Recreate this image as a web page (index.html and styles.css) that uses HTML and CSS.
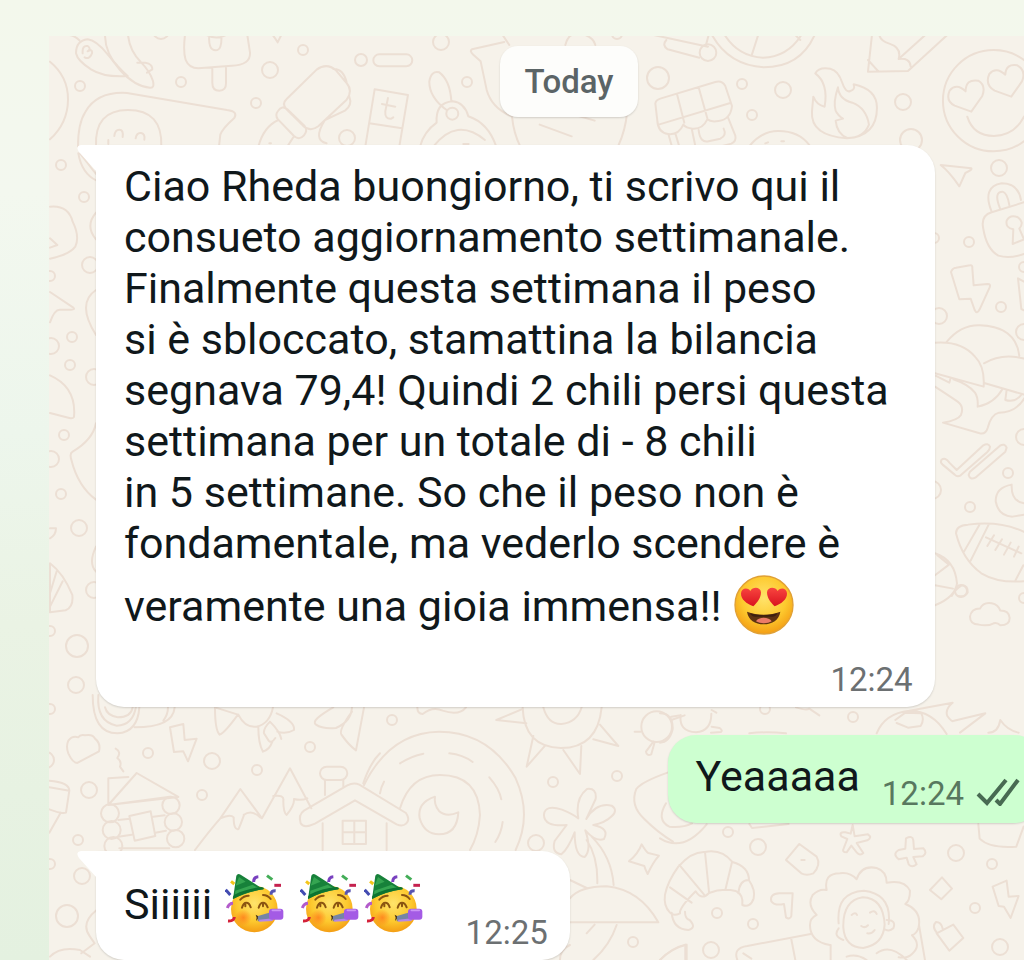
FILE: index.html
```html
<!DOCTYPE html>
<html lang="it">
<head>
  <meta charset="UTF-8">
  <meta name="viewport" content="width=device-width, initial-scale=1.0">
  <title>Chat</title>
  <link rel="stylesheet" href="styles.css">
</head>
<body>

<!-- Shared emoji and bubble tail -->
<svg class="sprite" aria-hidden="true">
  <defs>
    <radialGradient id="face" cx="50%" cy="38%" r="64%">
      <stop offset="0" stop-color="#ffe36b"/>
      <stop offset="0.6" stop-color="#fdc92e"/>
      <stop offset="1" stop-color="#f39a12"/>
    </radialGradient>
    <radialGradient id="blush">
      <stop offset="0" stop-color="#ff7a1c" stop-opacity="0.8"/>
      <stop offset="1" stop-color="#ff7a1c" stop-opacity="0"/>
    </radialGradient>
    <linearGradient id="heart" x1="0" y1="0" x2="0" y2="1">
      <stop offset="0" stop-color="#f8453f"/>
      <stop offset="1" stop-color="#d9121f"/>
    </linearGradient>
  </defs>
  <symbol id="love" viewBox="0 0 180 180">
    <circle cx="90" cy="90" r="87" fill="url(#face)" stroke="#e0a035" stroke-width="4"/>
    <path d="M58 94C38 86 20 74 21 55c1-14 18-20 28-7 7-14 31-13 32 4 0 16-10 30-23 42z" fill="url(#heart)"/>
    <path d="M122 94c-13-12-23-26-23-42 1-17 25-18 32-4 10-13 27-7 28 7 1 19-17 31-37 39z" fill="url(#heart)"/>
    <path d="M39 110c30 12 70 12 100 0-4 25-24 38-50 38s-46-13-50-38z" fill="#5d3312"/>
    <path d="M48 115c25 8 56 8 82 0-2 7-8 10-15 10H64c-8 0-13-3-16-10z" fill="#3d2010"/>
    <path d="M66 139c6-14 40-14 47 0-12 8-34 8-47 0z" fill="#ec7c68"/>
  </symbol>
  <symbol id="party" viewBox="0 0 180 180">
    <circle cx="88" cy="108" r="70" fill="url(#face)"/>
    <circle cx="55" cy="134" r="25" fill="url(#blush)"/>
    <path d="M24 78L34 8q4-8 13-3l68 44C82 54 52 63 24 78z" fill="#17813a"/>
    <path d="M42 12l20 14-30 12zM31 53l52-18 20 12-73 23z" fill="#35a551"/>
    <path d="M24 78q-2-8 4-13 38-19 81-23 10 1 7 7-49 6-92 29z" fill="#0d7331"/>
    <g fill="none" stroke="#8a5411" stroke-width="6" stroke-linecap="round">
      <path d="M46 80q10-12 25-12M114 66q14 0 23 12"/>
      <path d="M51 104q4-15 13-15t13 14M61 91v9M101 104q4-15 13-15t14 14M114 91v9"/>
    </g>
    <path d="M92 125l12 7-11 12 2-10z" fill="#473215"/>
    <path d="M99 129l48-14-5 27-44 3z" fill="#7685a5"/>
    <path d="M103 140l40-4v8l-41 2z" fill="#b587e8"/>
    <rect x="132" y="107" width="43" height="33" rx="9" fill="#a45be5"/>
    <path d="M142 112h24" stroke="#cc94f5" stroke-width="5" stroke-linecap="round"/>
    <g fill="none" stroke-width="9">
      <path d="M2 50l14 16" stroke="#424bb1"/>
      <path d="M7 105q5-14 17-14" stroke="#b35ccb"/>
      <path d="M9 144q18 1 19-12" stroke="#d42139"/>
      <path d="M86 27q0-15 14-16" stroke="#7840bf"/>
      <path d="M126 8l16 12" stroke="#43ad57"/>
      <path d="M148 37h20" stroke="#c5224f"/>
      <path d="M138 65q0-13 14-12" stroke="#5754b1"/>
      <path d="M18 25l10 8" stroke="#f4c61b"/>
    </g>
  </symbol>
  <symbol id="tail" viewBox="0 0 20 28">
    <path d="M20 0H4Q-2 1 2 7l18 20z" fill="#fff"/>
  </symbol>
</svg>

<main class="chat">

  <!-- Wallpaper -->
  <svg class="doodles" viewBox="49 36 975 924" preserveAspectRatio="xMinYMin slice" aria-hidden="true">
    <g class="dots">
      <circle cx="80" cy="86" r="5"/><circle cx="181" cy="82" r="5"/><circle cx="303" cy="50" r="5"/>
      <circle cx="270" cy="70" r="8"/><circle cx="256" cy="103" r="5"/><circle cx="361" cy="60" r="6"/>
      <circle cx="441" cy="42" r="8"/><circle cx="467" cy="82" r="5"/><circle cx="347" cy="138" r="8"/>
      <circle cx="161" cy="31" r="8"/><circle cx="617" cy="34" r="5"/>
      <circle cx="658" cy="78" r="11"/><circle cx="742" cy="84" r="5"/><circle cx="783" cy="90" r="8"/>
      <circle cx="752" cy="115" r="5"/><circle cx="903" cy="102" r="8"/><circle cx="911" cy="140" r="11"/>
      <circle cx="61" cy="165" r="5"/><circle cx="84" cy="197" r="5"/><circle cx="90" cy="265" r="8"/>
      <circle cx="50" cy="276" r="5"/><circle cx="72" cy="337" r="5"/><circle cx="51" cy="346" r="8"/>
      <circle cx="70" cy="365" r="5"/><circle cx="94" cy="377" r="8"/><circle cx="64" cy="435" r="5"/>
      <circle cx="51" cy="459" r="8"/><circle cx="61" cy="494" r="5"/><circle cx="79" cy="528" r="8"/>
      <circle cx="94" cy="590" r="8"/><circle cx="50" cy="631" r="5"/><circle cx="77" cy="646" r="11"/>
      <circle cx="999" cy="168" r="8"/><circle cx="969" cy="242" r="5"/><circle cx="934" cy="238" r="5"/>
      <circle cx="1024" cy="267" r="5"/><circle cx="1001" cy="307" r="5"/><circle cx="939" cy="316" r="8"/>
      <circle cx="1024" cy="332" r="8"/><circle cx="1024" cy="437" r="8"/><circle cx="1008" cy="473" r="5"/>
      <circle cx="970" cy="507" r="5"/><circle cx="932" cy="490" r="9"/><circle cx="961" cy="591" r="6"/>
      <circle cx="1024" cy="598" r="5"/><circle cx="76" cy="685" r="8"/><circle cx="50" cy="709" r="5"/>
      <circle cx="46" cy="760" r="8"/><circle cx="148" cy="753" r="5"/><circle cx="212" cy="761" r="8"/>
      <circle cx="257" cy="770" r="5"/><circle cx="310" cy="747" r="5"/><circle cx="202" cy="795" r="5"/>
      <circle cx="89" cy="790" r="8"/><circle cx="78" cy="840" r="5"/><circle cx="50" cy="864" r="5"/>
      <circle cx="82" cy="876" r="8"/><circle cx="67" cy="916" r="11"/><circle cx="392" cy="720" r="5"/>
      <circle cx="553" cy="782" r="5"/><circle cx="617" cy="776" r="5"/><circle cx="536" cy="843" r="8"/>
      <circle cx="633" cy="942" r="5"/><circle cx="853" cy="717" r="5"/><circle cx="765" cy="709" r="5"/>
      <circle cx="728" cy="832" r="5"/><circle cx="758" cy="847" r="8"/><circle cx="956" cy="853" r="8"/>
      <circle cx="992" cy="864" r="5"/><circle cx="717" cy="913" r="5"/><circle cx="753" cy="924" r="5"/>
      <circle cx="975" cy="908" r="5"/><circle cx="1000" cy="947" r="8"/><circle cx="711" cy="950" r="8"/>
    </g>

    <!-- top left: carrot, ice lolly, bubble, mitten, ticket, rabbit -->
    <g transform="scale(0.3333)">
      <path d="M150 185Q205 230 204 300T150 418"/>
      <path d="M200 105q20-2 38 16M228 160q0-38 35-42 25 2 60 45t60 65q-70 5-110-20t-45-48zM248 160q-2-25 15-22 12 8 0 16 15-8 13 6-8 20-22 12"/>
      <path d="M315 105q0 55 45 105t90 53q14 2 9-20-10-30-35-55-35-35-40-83M412 188q45-4 45 20l-16 10"/>
      <path d="M555 105q-6 50 2 75 10 25 38 25l100-8q58-2 55-40l-8-52M628 105q-4 45 19 46 20 0 17-46M620 105q30 15 58 0M637 206v42q0 24 21 24t20-24v-45"/>
      <path d="M818 105q8 10 15 22l11-22"/>
      <path d="M234 440q0-70 22-104 35-62 125-57l300 51q34 4 22 24-36 32-42 50l-4 36M288 440q-5-110 96-110 104 0 100 110M343 408q2-19 15-19t10 22M407 415q3-18 16-16t10 20M325 420v12"/>
      <path d="M860 297l90-88q30-22 58 2l32 38q20 24 0 50l-85 80q-24 18-46-2l-50-50q-14-16 1-30zM834 333q12-18 28-5l52 50q10 14-2 28-14 16-30 2l-48-50q-10-12 0-25zM1000 207q30-2 40 40M1048 290q10 25-13 42l-60 28M775 440q16-60 60-80M880 412l-18 28M975 360q-38 60 5 70M808 430h5"/>
      <rect x="1120" y="163" width="117" height="36" rx="18"/>
      <path d="M1124 268l100 17-26 155M1124 268l-28 172M1108 370l98 15M1146 312l40 8M1164 294l-8 40q-2 24 18 22l6-4"/>
      <path d="M1340 330q-52-38-52-85 5-34 30-28 32 24 36 85M1260 440q12-45 50-72-4-60 48-64 36 4 47 45 60 20 84 91M1300 440q70-90 155-20M1390 432h16"/>
      <circle cx="1357" cy="341" r="18"/>
      <path d="M1513 126l-97 22q-8 5 4 16l22 20 18 85q15 55 75 80M1508 105l20 30"/>
    </g>

    <!-- top right: compass, gift, flame, pencil, smiley -->
    <g transform="translate(512 0) scale(0.3333)">
      <path d="M160 135q10-35 28-30M220 105q25 10 30 30M0 350q5 50 25 90M83 374l96 35M345 340q-5 50-25 95M200 348l48 14"/>
      <path d="M425 105l163 35M463 120q-14 16 4 28l95 25M590 105l-8 30"/><circle cx="588" cy="158" r="25"/>
      <path d="M600 105q50 90 155 97 110 0 153-97M638 105q42 65 115 68 74-2 115-68M738 107l-18 56M850 105l15 15"/>
      <path d="M430 310q2-10 15-14l165-50q20-6 30 12l20 60q-4 40-40 45-24 4-34-5-14 30-44 28-20-2-28-12-14 32-46 28-30-4-32-40zM440 374l215-65M495 282l22 86M560 262l26 93M470 405l10 35M490 400l12 40M540 390l10 48M648 352l22 55q4 16-12 24l-35 9M560 390q4 40 30 34l35-8q20-10 10-30"/>
      <path d="M715 435q38-43 85-42 60 0 92 42M808 424h8M760 430l8-3"/>
      <path d="M938 320q12-70-28-100 10-20 45-14 24 6 35 40t25 27q16-4 10-20 70 15 70 70 0 85-90 92-110-8-105-80l4-45q10 25 34 30zM978 262q-15 45-7 70 6 14 22 24l-22 6q4 40 35 52 50 0 65-40-8-50-50-66-40-10-43-46z"/>
      <path d="M1080 105l-12 110 120-2 118-108M1068 180l32 35M1240 105l-80 72q10-34-28-46-26-8-30-26M1160 177q34-4 36 22"/>
      <circle cx="1445" cy="302" r="152"/>
      <path d="M1378 335l-50-18q-28-14-15-45 20-24 48 2 0-38 38-32 24 14 12 46zM1498 290l-50-18q-30-18-16-50 20-24 48 2 2-34 36-28 28 16 14 48zM1366 350q18 58 80 58 62-2 90-58"/>
    </g>

    <!-- left strip -->
    <g transform="translate(0 140) scale(0.3333)">
      <path d="M235 40q10 60 55 82M240 40l48 62M150 200q55-5 68 45 22 44 8 75-18 24-76 36M150 295l22 20-22 8"/>
      <path d="M288 218q-34 40 0 80M150 456l70 47q6 6-6 6h-35q-16 0-29 38M288 450q-60 40 0 135M150 706q80 35 72 125-4 6-14 3l-58-15M288 850q-10 50-70 85-10 5-4 24 20 80 74 120M150 1165h18q0 20-18 30M288 1220q-24 50 0 75M150 1270q40 30 67 95 4 36-20 46l-47 6zM150 1400l38-76M150 1360l20-66"/>
    </g>

    <!-- right strip: plane, padlock, bolt, dolphin, ticks, moon, ball, cloud -->
    <g transform="translate(900 140) scale(0.3333)">
      <path d="M122 75l92 10q4 4-18 14l-18 40q-30-44-56-64z"/>
      <path d="M275 215q-30-75 30-85 50 0 58 50M300 205q-20-50 8-50 14 4 20 40M275 217l97-30M275 217q-34 10-25 50 10 60 45 80 35 10 77-5M340 268q-24-4-20-26 10-20 34-10 20 14 4 34l14 32-34 14z"/>
      <path d="M153 396q4-12 15-13l42-7q8-2 7 10l4 50 42-4q10 0 6 10l-30 66q-8 16-15 2l-12-34-34 2zM372 425l-18-10 10 92 8 4"/>
      <path d="M140 606q42-52 100-50 108 4 118 92M105 608q80-6 120 42 30 30 26 90L105 700M252 670q54-32 120-14M255 730l117 34M108 708l40 20 4-15M160 718q45 15 65 40 10 15 8 42 50-10 75-54M105 740q40 26 68 45 20 15 10 40-10 16-54 23l110 32q18 4 24-16 10-40 34-46 54 0 80-50M320 750l-4 30q30 10 50-18"/>
      <path d="M124 960q12-10 24 8l22 22 80-74q14-8 20 4 0 8-8 16l-80 70q-10 6-18-2l-36-30q-8-6-4-14zM210 995l90-78q14-8 20 6l-4 12-90 78q-16 8-20-8z"/>
      <path d="M335 1034q-48 8-48 50 8 44 50 46l35-6M335 1034q-2 50 37 56"/>
      <path d="M168 1180q0-24 36-26 100-12 168 22M168 1180q20 80 76 120 50 30 128 24M238 1155l-46 80M266 1154l-54 108M258 1192l106 48M282 1186l-20 32M306 1198l-20 32M332 1208l-20 36M356 1220l-14 30M370 1276l-24 46"/>
      <path d="M105 1240q60 20 66 90-4 40-66 66M105 1336l54 10M105 1306l42-32-35-28M155 1368q10-20 30-32 20 0 18 22-8 14-28 10"/>
      <path d="M236 1454q-26 0-26-24 4-24 30-24 10-20 35-16 20 4 26 22 26 0 28 22 0 22-28 22-10-10-20-6-18 10-45 4z"/>
    </g>

    <!-- lower left: banana, bolt, cabin, mountains, house -->
    <g transform="translate(40 690) scale(0.3333)">
      <path d="M158 15q0 116 75 115 60-4 65-78M175 15q-6 80 55 92 50-2 58-58M195 52q6 25 38 30 40 0 45-30M404 52q-5 60-120 60M384 52q0 22-14 40"/>
      <path d="M85 190q-8-20 0-38 12-16 30-10 6-10 20-6 24-4 30 10 18 14 12 38l-65 35q-14 0-27-29zM227 176q18 10 5 28 14 10 8 26l10 14M390 112l40-10 4 48 36-4-26 68-14-30-28 2z"/>
      <path d="M525 52q0 70 14 82 14-4 55-60zM595 74q20 40 54 36 40-8 50-58M655 110q0 50 14 75 20-6 28-30M690 95q-20 20-18 35l14 22q8 10 20-8M690 95q30 30 34 52M710 70q56 25 52 50-24 14-50 5"/>
      <path d="M880 52q-70 40-52 52 20 14 60 10 46-20 48-62M936 65q-40 55-32 68 20 30 44 48l24-128"/>
      <path d="M28 272q60 5 60 30l-10 66q-14 4-50-10M28 292l60 10M62 368l-34 60"/>
      <path d="M205 345v-80l60-4M205 345l85-96 125 72zM205 345l185-25M235 390l35-4M235 440l40-6M340 380l34-4M346 428l32-6M268 378l64-14 14 74-62 14zM238 475h150"/>
      <circle cx="210" cy="370" r="27"/><circle cx="215" cy="420" r="27"/><circle cx="220" cy="468" r="27"/>
      <circle cx="393" cy="346" r="26"/><circle cx="400" cy="396" r="26"/><circle cx="407" cy="446" r="26"/>
      <path d="M465 480q45-60 76-95l60-88 65 88 84-150 64 120M541 385q30-14 40-3 0 40 15 35 20-50 15-42 24-18 50 8M700 318q34-5 30 15 0 34 10 42 24-30 22-48 22 6 40-2"/>
      <path d="M782 400q-8-25 10-38l130-76q20-10 36-2l140 85q14 20 0 32-10 10-28 2l-125-72-120 70q-34 16-43-1zM855 315v-45M910 290v-20M848 400v80M1040 400v80"/>
      <rect x="840" y="230" width="82" height="40" rx="20"/>
      <path d="M908 392h70v70h-70zM943 392v70M908 427h70M970 280q20-60 50-90"/>
      <path d="M170 660q-50 40-20 80l14 20-40 30M30 800q30-32 90-20l30 20"/>
    </g>

    <!-- lower middle: rainbow, sun, palm island -->
    <g transform="translate(360 690) scale(0.3333)">
      <path d="M172 52q0 20 16 20 30-24 60-10 50 16 70-10"/>
      <path d="M12 285q78-158 225-160 150 0 230 140 50 110 0 215M120 355q30-100 120-100 116 0 120 120-4 60-30 105M120 220q34-22 70-29M268 190q40 4 70 26M388 262q30 34 36 66M428 396q-4 34-22 60M72 275q-10 18-12 35"/>
      <path d="M225 320q-54 18-46 65 14 48 58 48 54 0 58-66-36 16-58-4-16-20-12-43z"/>
      <path d="M488 52q4 120 115 122 110 0 122-122M550 52q14 52 55 50 46-4 60-50M485 58l-76 32 90 10M520 138l-20 92 56-64M610 180l50 72 4-84M720 104l55 64-75-20"/>
      <circle cx="890" cy="110" r="46"/><path d="M842 125h-18M880 155l-22 30q2 14 16 8l10-36M934 90l40-14"/>
      <path d="M655 385q-10-60 26-88 30-4 26 30l-28 60q30-50 76-40 20 14 0 32-20 20-55 26 50 10 32 42-24 10-56-26 20 60-2 80-30 0-30-74-20 50-40 66-30-4-20-40l36-48q-70 6-68-32 4-30 54-14 30 12 49 26zM680 450q34 50 32 130M695 440q60 60 66 145M630 625q30-36 110-36 100 10 155 108H630M630 570l50 24M680 730l24-26M770 705q-20 60-70 105M630 765q-30 14-30 45"/>
      <path d="M925 247q-80 28-96 50-20 50 24 90 40 40 86 68M845 463q14 24 20 26l32 8q-18 20-34 55-8-16-10-24l-46-14q28-24 38-51z"/>
      <path d="M900 810q34-36 76-46v46"/>
    </g>

    <!-- lower right: ball, croissant, flowers, girl -->
    <g transform="translate(660 690) scale(0.3333)">
      <path d="M0 70q40 0 38 48-10 40-38 40M62 75q-6 50 46 52 46-4 46-56M34 80l28-4M155 110l24 4q10 8 4 12l-30 2M155 60l14 8M408 52q30 10 40 4l30 20M268 130q50-6 110 0"/>
      <path d="M650 130q24-60 98-68 70 0 112 70M706 90l30-22 48 2q10 20-2 38l-38 5-34-14M748 62l130-24q-24 20-16 40 14 20 20 14l94-22-76 58M985 128q30 0 36-38 20 30 55 38"/>
      <path d="M18 340q-30 50 10 70 40 4 68-10M0 445q70 44 140-42M268 402l8 12 110-12M955 402l4 44q30 30 110 24l22-60"/>
      <path d="M30 668q-20-20-15-54 8-40 40-84 40-46 80-44 50-10 82 30 50 14 50 55 20 30 14 54-10 30-34 20 4-30-20-42-40-10-80 6-22 24-40-5-50 50-47 66-20 10-30-2zM30 592l65 46M58 525l75 90M135 486l12 120M216 516l-20 84M265 570q-26 0-30 40M35 668q4 50 50 52 26-6 4-30-14-4-14-25"/>
      <path d="M378 510l40-48 52 38q14 24-10 50-20 8-36 0zM424 510h10M578 405l6 34 40-6q14 10-2 18l-32 8 20 30q-10 10-20-2l-16-20-14 20q-16 0-8-14l10-26-18-8q-8-14 12-12l16 4z"/>
      <path d="M738 445q20-10 22 6l2 26 28-2q14 14-2 24l-28 2 10 22q-14 12-24 0l-6-20-24 5q-20-16 0-28l20-4z"/>
      <path d="M398 610h-40q-30 2-24 24 10 14 38 8l6 40q12 8 16-4z"/>
      <path d="M846 562l30 34-32 32-34-28zM830 730l50-26 30 40-42 38zM848 716q-4-20-20-20-14 14 4 34M998 590l42-18 6 48 30-2-24 66-20-34-16-2z"/>
      <path d="M510 765q-60-10-60-60 0-20 20-30-30-30-12-60 20-20 42-15-10-50 40-50 30-4 50 18 14-44 60-34 30 10 30 44 54-10 70 24 0 30-14 40 50 20 40 70-6 20-20 24 30 30 0 56-14 14-40 10M536 700q-8-94 76-98 84 10 74 100M550 712q4 60 60 62 60-10 64-70-4-80-66-82-60 10-58 90zM536 715q-18 24 14 35M680 690q30 0 20 25-10 10-24 4M575 675q12-10 16 0M630 668q14-10 20 4M604 708q10 8 20-2M622 730q14 2 22-10M512 765v45M560 800q30-10 60 10M650 790q40-30 90 20M777 705l18 105"/>
      <path d="M232 810q-14-36 30-42l190-36M394 748l12 62M250 790l24 16M0 810q34-34 80-46v46"/>
    </g>
  </svg>

  <div class="thread">
    <div class="date">Today</div>

    <article class="bubble received">
      <svg class="tail" aria-hidden="true"><use href="#tail"/></svg>
      <p class="text">Ciao Rheda buongiorno, ti scrivo qui il<br>
        consueto aggiornamento settimanale.<br>
        Finalmente questa settimana il peso<br>
        si è sbloccato, stamattina la bilancia<br>
        segnava 79,4! Quindi 2 chili persi questa<br>
        settimana per un totale di - 8 chili<br>
        in 5 settimane. So che il peso non è<br>
        fondamentale, ma vederlo scendere è<br>
        veramente una gioia immensa!! <svg class="emoji" role="img" aria-label="😍"><use href="#love"/></svg></p>
      <time class="time">12:24</time>
    </article>

    <article class="bubble sent">
      <p class="text">Yeaaaaa</p>
      <time class="time">12:24</time>
      <svg class="ticks" viewBox="0 0 44 28" aria-hidden="true">
        <path d="M2 16l9 9L30 2M20 22l4 4L42 2"/>
      </svg>
    </article>

    <article class="bubble received short">
      <svg class="tail" aria-hidden="true"><use href="#tail"/></svg>
      <p class="text">Siiiiii <svg class="emoji" role="img" aria-label="🥳"><use href="#party"/></svg> <svg class="emoji" role="img" aria-label="🥳"><use href="#party"/></svg><svg class="emoji" role="img" aria-label="🥳"><use href="#party"/></svg></p>
      <time class="time">12:25</time>
    </article>
  </div>
</main>

</body>
</html>
```
FILE: styles.css
```css
* {
  margin: 0;
  padding: 0;
  box-sizing: border-box;
}

body {
  background: linear-gradient(#f3f8ec, #f3f8ef 20%, #edf6ec 45%, #eaf3e4 65%, #e4f1e0);
  font-family: Roboto, "Liberation Sans", sans-serif;
  min-height: 100vh;
  padding: 36px 0 0 49px;
}

.sprite {
  position: absolute;
  width: 0;
  height: 0;
}

.chat {
  position: relative;
  min-height: calc(100vh - 36px);
  background: #f6f2ea;
  overflow: hidden;
}

.doodles {
  position: absolute;
  top: 0;
  left: 0;
  width: 100%;
  height: 100%;
  fill: none;
  stroke: #ecdfd4;
  stroke-width: 6;
  stroke-linejoin: round;
  stroke-linecap: round;
}

.doodles .dots {
  stroke-width: 2;
}

/* the thread runs a little past the right edge */
.thread {
  position: relative;
  display: flex;
  flex-direction: column;
  align-items: flex-start;
  gap: 28px;
  margin-right: -18px;
  padding: 10px 0 0 47px;
}

.date {
  align-self: center;
  padding: 16px 25px;
  border-radius: 18px;
  background: #fdfdfb;
  box-shadow: 0 1px 2px rgba(0, 0, 0, 0.15);
  color: #5b6466;
  font-size: 33px;
  font-weight: 500;
  line-height: 39px;
}

.bubble {
  position: relative;
  border-radius: 28px;
  box-shadow: 0 1px 2px rgba(0, 0, 0, 0.15);
}

.received {
  background: #fff;
  border-top-left-radius: 0;
  padding: 16px 22px 8px 28px;
}

.received .text {
  padding-right: 24px;
}

.text {
  color: #10181b;
  font-size: 43px;
  line-height: 51px;
}

.time {
  display: block;
  color: #6c7072;
  font-size: 33px;
  line-height: 39px;
  text-align: right;
}

.received .time {
  margin-top: 25px;
}

.emoji {
  width: 60px;
  height: 60px;
  margin: 6px 2px 0;
  vertical-align: -14px;
}

.tail {
  position: absolute;
  top: 0;
  left: -19px;
  width: 20px;
  height: 28px;
}

.sent {
  display: flex;
  align-items: flex-end;
  align-self: flex-end;
  background: #cdffd0;
  padding: 16px 22px 10px 28px;
}

.sent .text {
  margin-bottom: 11px;
}

.sent .time {
  margin-left: 22px;
  color: #58785f;
}

.ticks {
  width: 44px;
  height: 28px;
  margin: 0 0 7px 12px;
  fill: none;
  stroke: #486a52;
  stroke-width: 4;
}

.short {
  display: flex;
  align-items: flex-end;
}

.short .text {
  margin-bottom: 19px;
  padding-right: 40px;
}
```
